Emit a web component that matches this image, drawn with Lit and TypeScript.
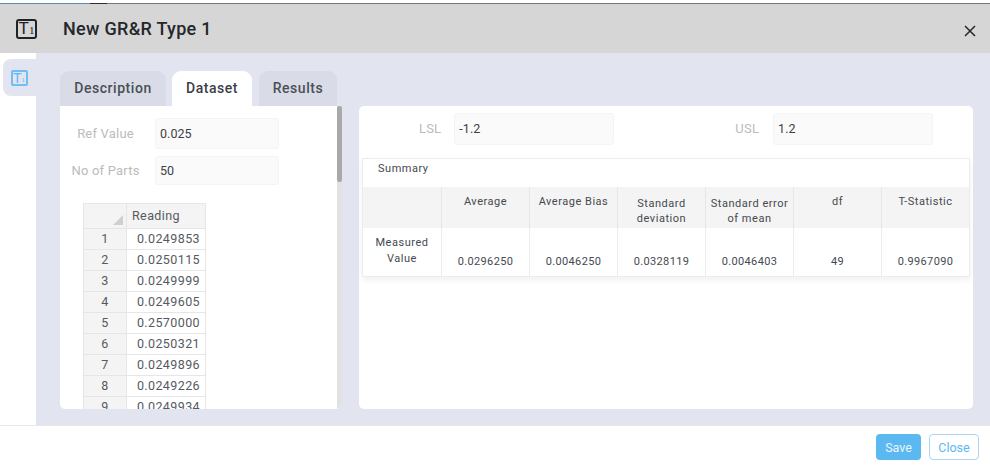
import { LitElement, html, css } from "lit";
import { customElement } from "lit/decorators.js";

const READINGS = ["0.0249853","0.0250115","0.0249999","0.0249605","0.2570000","0.0250321","0.0249896","0.0249226","0.0249934"];
const COLS = [
  ["Average","0.0296250"],["Average Bias","0.0046250"],["Standard deviation","0.0328119"],
  ["Standard error of mean","0.0046403"],["df","49"],["T-Statistic","0.9967090"],
];

@customElement("app-root")
export class AppRoot extends LitElement {
  static styles = css`
    :host { display:block; width:990px; height:465px; overflow:hidden; background:#fff;
      font-family:Roboto,"Liberation Sans",sans-serif; color:#333; }
    .top { height:3px; background:#fff; }
    .rule { height:1px; display:flex; }
    .rule span:nth-child(1) { width:90px; background:#5f86b8; }
    .rule span:nth-child(2) { width:17px; background:#2b2d30; }
    .rule span:nth-child(3) { flex:1; background:#74777b; }
    .header { height:49px; background:#d6d6d6; display:flex; align-items:center; padding:0 14px 0 16px; }
    .logo { width:17px; height:16px; border:2.5px solid #1f2227; border-radius:3px; display:flex; align-items:flex-start; justify-content:center; flex:none; color:#1f2227; line-height:1; font-family:"Liberation Sans",sans-serif; overflow:hidden; }
    .logo b { font-weight:400; font-size:17px; margin-top:-1px; }
    .logo i { font-style:normal; font-size:11px; margin-top:4px; font-family:"Liberation Serif",serif; }
    .title { margin-left:26px; font-size:18px; font-weight:500; letter-spacing:.3px; color:#24272c; flex:1; }
    .x { width:12px; height:12px; display:block; margin-top:4px; }
    .body { height:372px; display:flex; background:#e2e4f0; }
    .side { width:36px; background:#fff; padding:6px 0 0 3px; box-sizing:border-box; flex:none; }
    .side-item { height:37px; background:#e2e4f0; border-radius:8px 0 0 8px; display:flex; align-items:center; justify-content:center; padding-right:1px; box-sizing:border-box; }
    .logo.small { width:13px; height:12px; border:2px solid #6cc0f3; border-radius:2px; color:#5cb8f0; }
    .logo.small b { font-size:14px; margin-top:-1px; }
    .logo.small i { font-size:7px; margin-top:5px; }
    .main { flex:1; padding:18px 17px 16px 24px; display:flex; gap:17px; min-width:0; }
    .col { width:282px; flex:none; display:flex; flex-direction:column; }
    .tabs { height:35px; display:flex; gap:6px; flex:none; }
    .tab { background:#d9dce6; border-radius:9px 9px 0 0; display:flex; align-items:center; justify-content:center; font-size:14px; font-weight:500; letter-spacing:.55px; color:#4a4f57; box-sizing:border-box; padding-bottom:1px; }
    .tab.active { background:#fff; color:#3b4048; }
    .t1 { width:106px; } .t2 { width:80px; } .t3 { width:78px; margin-left:1px; }
    .card { background:#fff; border-radius:0 0 5px 5px; height:303px; display:flex; overflow:hidden; }
    .scroll { flex:1; min-width:0; overflow:hidden; padding:12px 0 0 0; }
    .bar { width:5px; background:#e2e2e2; flex:none; }
    .thumb { height:76px; background:#a9a9a9; border-radius:2px; }
    .field { display:flex; align-items:center; }
    .field + .field { margin-top:7px; }
    .lbl { font-size:13px; letter-spacing:.2px; color:#bbbbbb; text-align:center; }
    .inp { background:#fafafa; border:1px solid #f4f4f4; border-radius:3px; box-sizing:border-box; display:flex; align-items:center; font-size:12.5px; color:#3d4147; letter-spacing:.05px; padding-left:4px; }
    .left-lbl { width:91px; margin-right:4px; box-sizing:border-box; }
    .left-inp { width:124px; height:31px; }
    .f2 .left-inp { height:29px; }
    .sheet { margin:18px 0 0 23px; border-collapse:collapse; font-size:12.5px; letter-spacing:.4px; color:#555a61; table-layout:fixed; width:123px; }
    .sheet th, .sheet td { border:1px solid #e6e6e6; height:20px; padding:0; font-weight:400; line-height:20px; }
    .sheet th { background:#f4f4f4; }
    .sheet th:first-child { width:42px; text-align:center; }
    .sheet thead th { height:24px; position:relative; }
    .sheet thead th:last-child { text-align:left; padding-left:5px; }
    .sheet td { text-align:right; padding-right:5px; }
    .corner { position:absolute; right:3px; bottom:3px; width:0; height:0; border-style:solid; border-width:0 0 10px 10px; border-color:transparent transparent #cfcfcf transparent; }
    .panel { flex:1; min-width:0; background:#fff; border-radius:5px; padding:7px 3px 0 3px; box-sizing:border-box; height:303px; align-self:flex-end; }
    .limits { display:flex; align-items:center; height:32px; }
    .limits .inp { padding-bottom:2px; }
    .limits .lbl { padding-bottom:1px; }
    .l1 { margin-left:57px; } .i1 { width:160px; height:32px; margin-left:13px; }
    .l2 { margin-left:121px; } .i2 { width:160px; height:32px; margin-left:14px; }
    .summary { margin-top:13px; margin-right:1px; border:1px solid #ececec; box-shadow:0 3px 6px rgba(0,0,0,.06); width:608px; box-sizing:border-box; font-size:11px; letter-spacing:.52px; color:#45494f; }
    .sum-title { height:28px; padding:3px 0 0 15px; box-sizing:border-box; line-height:13px; }
    .grid { display:grid; grid-template-columns:78px repeat(6,88px); grid-template-rows:41px 48px; }
    .h { background:#f4f4f4; border-left:1px solid #e6e6e6; text-align:center; line-height:15px; padding:7px 4px 0; box-sizing:border-box; }
    .h:first-child { border-left:0; }
    .h.two { padding-top:9px; }
    .v { border-left:1px solid #ececec; display:flex; align-items:flex-end; justify-content:center; padding-bottom:8px; box-sizing:border-box; letter-spacing:.35px; }
    .name { text-align:center; line-height:15.5px; padding:7px 4px 0; box-sizing:border-box; }
    .footer { height:40px; border-top:1px solid #e8e8e8; box-sizing:border-box; display:flex; justify-content:flex-end; align-items:flex-start; gap:8px; padding:8px 11px 0 0; }
    .btn { height:26px; border-radius:4px; box-sizing:border-box; display:flex; align-items:center; justify-content:center; font-size:12.5px; }
    .save { width:45px; background:#5cb8f0; color:#eaf6fd; }
    .close { width:50px; background:#fff; border:1px solid #a9d6f5; color:#5cb8f0; }
  `;

  render() {
    return html`
      <div class="top"></div>
      <div class="rule"><span></span><span></span><span></span></div>
      <div class="header">
        <div class="logo"><b>T</b><i>1</i></div>
        <div class="title">New GR&amp;R Type 1</div>
        <svg class="x" viewBox="0 0 12 12"><path d="M1 1l10 10M11 1l-10 10" stroke="#24272c" stroke-width="1.5" fill="none"/></svg>
      </div>
      <div class="body">
        <div class="side"><div class="side-item"><div class="logo small"><b>T</b><i>1</i></div></div></div>
        <div class="main">
          <div class="col">
            <div class="tabs">
              <div class="tab t1">Description</div>
              <div class="tab t2 active">Dataset</div>
              <div class="tab t3">Results</div>
            </div>
            <div class="card">
              <div class="scroll">
                <div class="field"><div class="lbl left-lbl">Ref Value</div><div class="inp left-inp">0.025</div></div>
                <div class="field f2"><div class="lbl left-lbl">No of Parts</div><div class="inp left-inp">50</div></div>
                <table class="sheet">
                  <thead><tr><th><span class="corner"></span></th><th>Reading</th></tr></thead>
                  <tbody>${READINGS.map((r,i)=>html`<tr><th>${i+1}</th><td>${r}</td></tr>`)}</tbody>
                </table>
              </div>
              <div class="bar"><div class="thumb"></div></div>
            </div>
          </div>
          <div class="panel">
            <div class="limits">
              <div class="lbl l1">LSL</div><div class="inp i1">-1.2</div>
              <div class="lbl l2">USL</div><div class="inp i2">1.2</div>
            </div>
            <div class="summary">
              <div class="sum-title">Summary</div>
              <div class="grid">
                <div class="h"></div>
                ${COLS.map(c=>html`<div class="h ${c[0].length>12?"two":""}">${c[0]}</div>`)}
                <div class="name">Measured Value</div>
                ${COLS.map(c=>html`<div class="v">${c[1]}</div>`)}
              </div>
            </div>
          </div>
        </div>
      </div>
      <div class="footer">
        <div class="btn save">Save</div>
        <div class="btn close">Close</div>
      </div>
    `;
  }
}
